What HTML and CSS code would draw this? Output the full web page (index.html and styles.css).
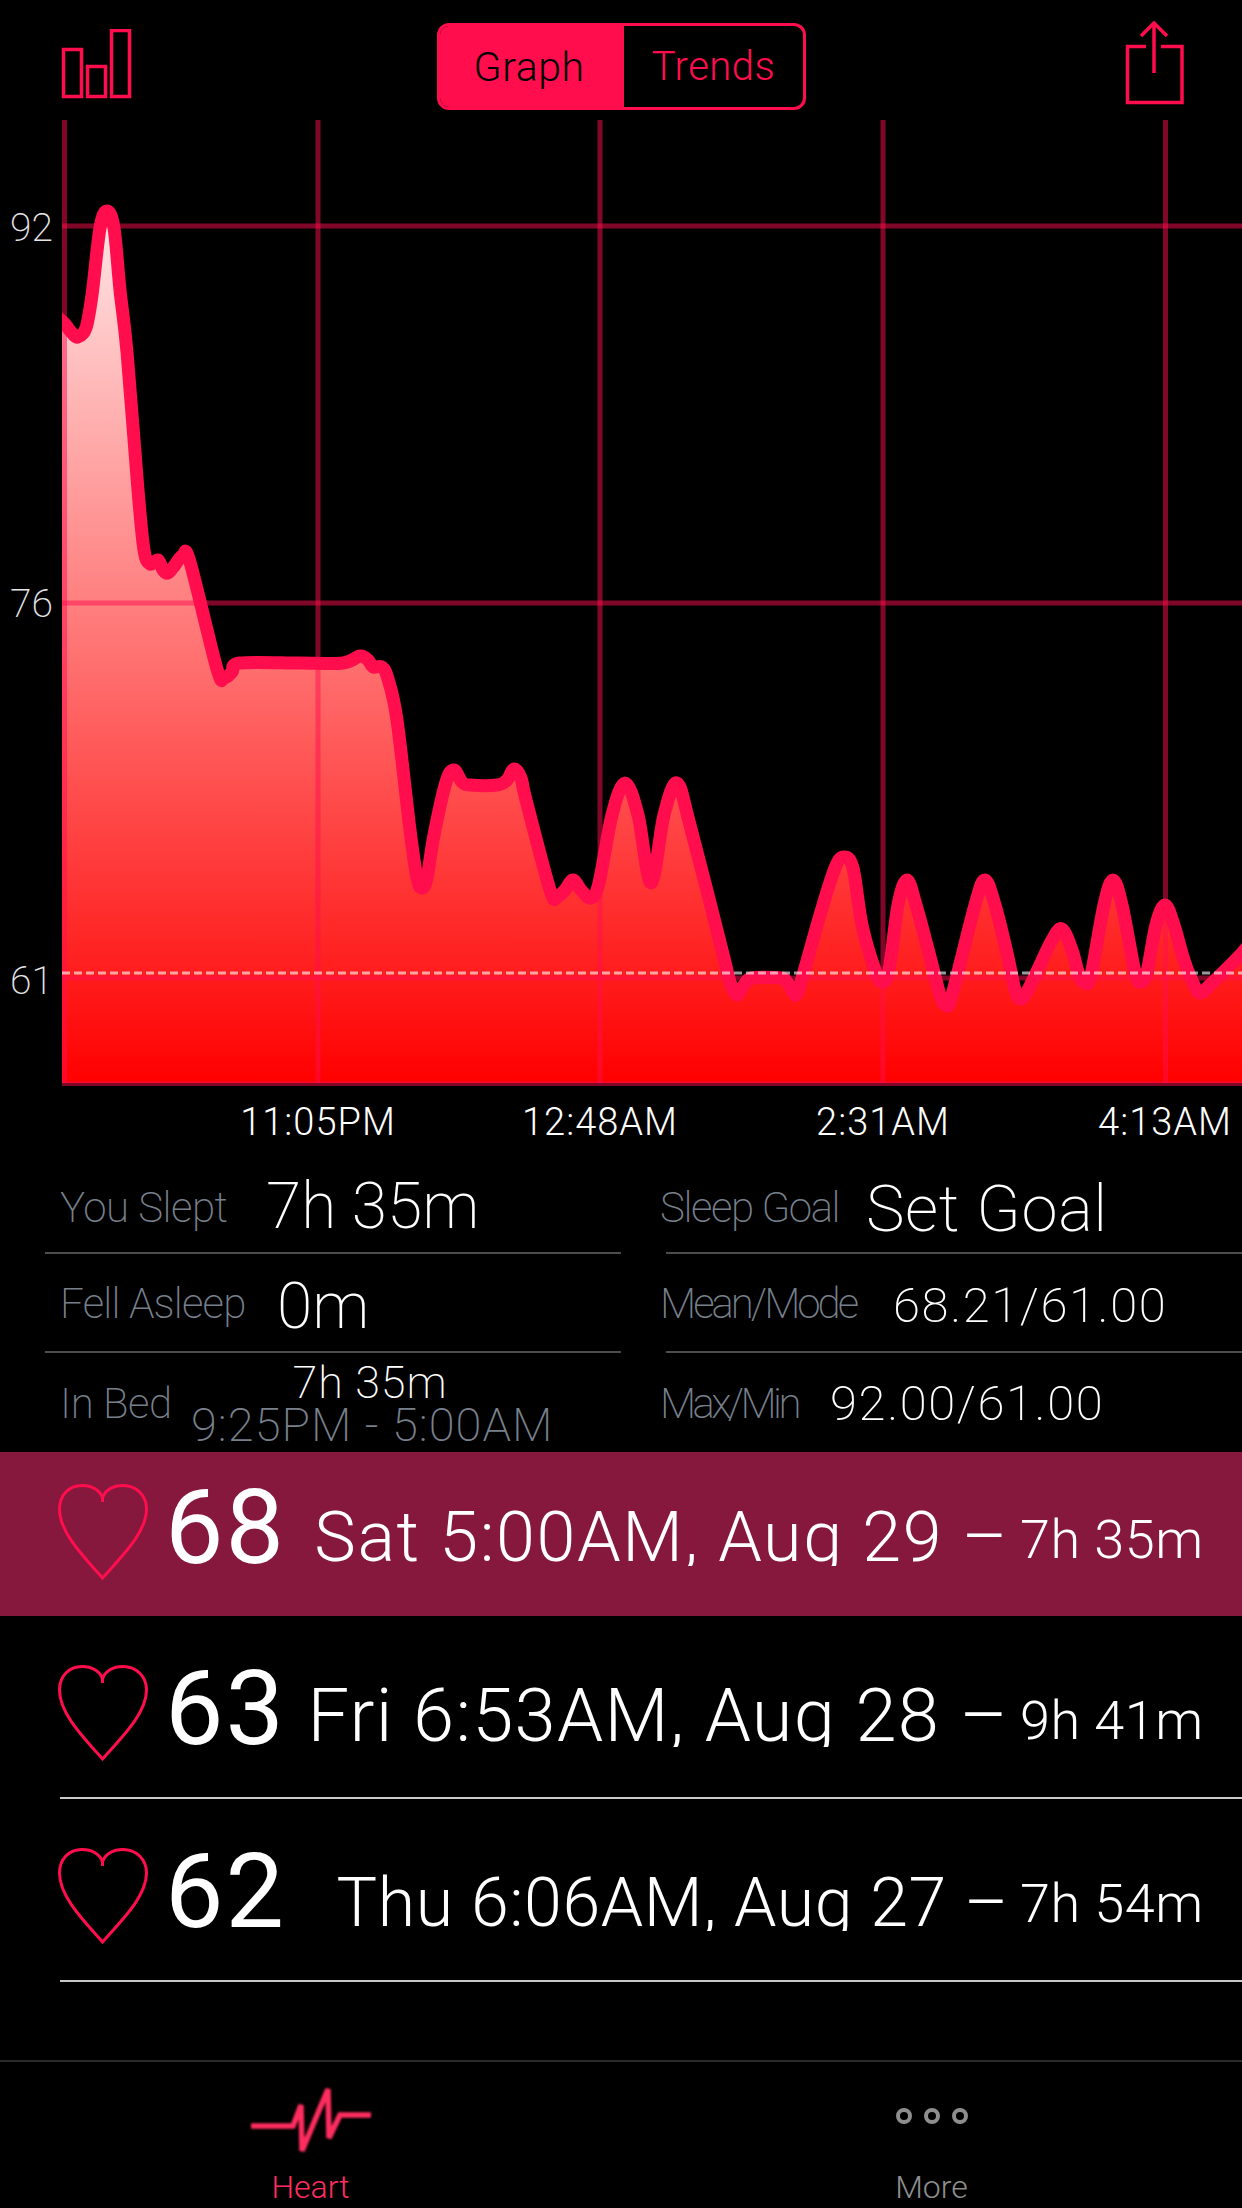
FILE: index.html
```html
<!DOCTYPE html>
<html lang="en">
<head>
    <meta charset="UTF-8">
    <title>Heart</title>
    <link rel="stylesheet" href="styles.css">
</head>
<body>
    <div class="page">
        <div class="topbar">
            <svg class="bars-icon" width="72" height="72" viewBox="0 0 72 72">
                <rect x="2.5" y="20.5" width="18" height="47"/>
                <rect x="26.5" y="37.5" width="18" height="30"/>
                <rect x="50.5" y="1.5" width="18" height="66"/>
            </svg>
            <div class="segments">
                <div class="segment active">Graph</div>
                <div class="segment">Trends</div>
            </div>
            <svg class="share-icon" width="60" height="84" viewBox="0 0 60 84">
                <path d="M22 25.5H3.5V81.5H58V25.5H37"/>
                <path d="M30 2V52M17 15L30 2L43 15"/>
            </svg>
        </div>

        <svg id="chart" class="chart" width="1242" height="1030" viewBox="0 120 1242 1030">
            <defs>
                <linearGradient id="fillGrad" gradientUnits="userSpaceOnUse" x1="0" y1="120" x2="0" y2="1083">
                    <stop offset="0" stop-color="#ffffff"/>
                    <stop offset="1" stop-color="#ff0000"/>
                </linearGradient>
                <clipPath id="plotClip"><rect x="62" y="120" width="1180" height="966"/></clipPath>
            </defs>
            <g clip-path="url(#plotClip)">
                <path id="area" fill="url(#fillGrad)"/>
                <g class="grid">
                    <line x1="64.5" y1="120" x2="64.5" y2="1083"/>
                    <line x1="318" y1="120" x2="318" y2="1083"/>
                    <line x1="600" y1="120" x2="600" y2="1083"/>
                    <line x1="883" y1="120" x2="883" y2="1083"/>
                    <line x1="1165.5" y1="120" x2="1165.5" y2="1083"/>
                    <line x1="62" y1="226" x2="1242" y2="226"/>
                    <line x1="62" y1="603" x2="1242" y2="603"/>
                    <line x1="62" y1="978" x2="1242" y2="978"/>
                    <line x1="62" y1="1084" x2="1242" y2="1084"/>
                </g>
                <path id="curve" class="curve"/>
                <line class="mode-line" x1="62" y1="973" x2="1242" y2="973"/>
            </g>
            <g class="y-labels">
                <text x="10" y="241">92</text>
                <text x="10" y="617">76</text>
                <text x="10" y="994">61</text>
            </g>
            <g class="x-labels">
                <text x="318" y="1135">11:05PM</text>
                <text x="600" y="1135">12:48AM</text>
                <text x="883" y="1135">2:31AM</text>
                <text x="1165" y="1135">4:13AM</text>
            </g>
        </svg>

        <div class="stats">
            <div class="stat-col left">
                <div class="stat first">
                    <span class="label w-slept">You Slept</span>
                    <span class="value big slept">7h 35m</span>
                </div>
                <div class="stat second">
                    <span class="label w-asleep">Fell Asleep</span>
                    <span class="value big asleep">0m</span>
                </div>
                <div class="stat third">
                    <span class="label w-bed">In Bed</span>
                    <div class="bed-times">
                        <div class="bed-total">7h 35m</div>
                        <div class="bed-range">9:25PM - 5:00AM</div>
                    </div>
                </div>
            </div>
            <div class="stat-col right">
                <div class="stat first">
                    <span class="label w-goal">Sleep Goal</span>
                    <span class="value big goal">Set Goal</span>
                </div>
                <div class="stat second">
                    <span class="label w-mean">Mean/Mode</span>
                    <span class="value mid mean">68.21/61.00</span>
                </div>
                <div class="stat third">
                    <span class="label w-max">Max/Min</span>
                    <span class="value mid max">92.00/61.00</span>
                </div>
            </div>
        </div>

        <div class="day selected">
            <svg class="heart" width="90" height="96" viewBox="0 0 90 96"><path d="M44.5 18V14C47 6 55 1.5 65 1.5C78 1.5 88.5 11 88.5 25C88.5 48 65 71 44.5 94C24 71 1.5 48 1.5 25C1.5 11 11 1.5 24 1.5C34 1.5 42 6 44.5 14"/></svg>
            <span class="bpm">68</span>
            <span class="date date-sat">Sat 5:00AM, Aug 29 –</span>
            <span class="duration">7h 35m</span>
        </div>
        <div class="day">
            <svg class="heart" width="90" height="96" viewBox="0 0 90 96"><path d="M44.5 18V14C47 6 55 1.5 65 1.5C78 1.5 88.5 11 88.5 25C88.5 48 65 71 44.5 94C24 71 1.5 48 1.5 25C1.5 11 11 1.5 24 1.5C34 1.5 42 6 44.5 14"/></svg>
            <span class="bpm">63</span>
            <span class="date date-fri">Fri 6:53AM, Aug 28 –</span>
            <span class="duration">9h 41m</span>
        </div>
        <div class="day">
            <svg class="heart" width="90" height="96" viewBox="0 0 90 96"><path d="M44.5 18V14C47 6 55 1.5 65 1.5C78 1.5 88.5 11 88.5 25C88.5 48 65 71 44.5 94C24 71 1.5 48 1.5 25C1.5 11 11 1.5 24 1.5C34 1.5 42 6 44.5 14"/></svg>
            <span class="bpm">62</span>
            <span class="date date-thu">Thu 6:06AM, Aug 27 –</span>
            <span class="duration">7h 54m</span>
        </div>

        <div class="tabbar">
            <div class="tab active">
                <svg class="tab-icon" width="124" height="72" viewBox="0 0 124 72">
                    <path class="pulse" d="M2 41H44L52 20L53 66L79 4L80 53L91 30H122"/>
                </svg>
                <span class="tab-label">Heart</span>
            </div>
            <div class="tab">
                <svg class="tab-icon" width="124" height="72" viewBox="0 0 124 72">
                    <g class="dots">
                        <circle cx="34" cy="31" r="6"/>
                        <circle cx="62" cy="31" r="6"/>
                        <circle cx="90" cy="31" r="6"/>
                    </g>
                </svg>
                <span class="tab-label">More</span>
            </div>
        </div>
    </div>

    <script src="chart.js"></script>
</body>
</html>
```
FILE: styles.css
```css
* {
    box-sizing: border-box;
}
html, body {
    margin: 0;
    background: #000;
}
body {
    font-family: Roboto, "Liberation Sans", sans-serif;
    font-weight: 200;
    color: #fff;
}
.page {
    width: 1242px;
    height: 2208px;
    overflow: hidden;
}

/* top bar */
.topbar {
    height: 120px;
    display: flex;
    justify-content: space-between;
    padding: 0 58px 0 61px;
}
.bars-icon {
    margin-top: 29px;
}
.bars-icon rect {
    fill: none;
    stroke: #ff0d4d;
    stroke-width: 3.5;
}
.share-icon {
    margin-top: 21px;
}
.share-icon path {
    fill: none;
    stroke: #ff0d4d;
    stroke-width: 3.5;
}
.segments {
    display: flex;
    width: 369px;
    height: 87px;
    margin-top: 23px;
    margin-right: 14px;
    border: 3px solid #ff0d4d;
    border-radius: 12px;
    overflow: hidden;
}
.segment {
    flex: 1;
    display: flex;
    align-items: center;
    justify-content: center;
    color: #ff0d4d;
    font-size: 40px;
    font-weight: 300;
    letter-spacing: 0.5px;
}
.segment.active {
    flex: 0 0 184px;
    padding-right: 6px;
    background: #ff0d4d;
    color: #000;
    font-size: 41px;
}

/* chart */
.chart {
    display: block;
}
.grid line {
    stroke: rgba(255, 13, 77, 0.5);
    stroke-width: 5;
}
.curve {
    fill: none;
    stroke: #ff0d4d;
    stroke-width: 13;
    stroke-linejoin: round;
}
.mode-line {
    stroke: rgba(255, 255, 255, 0.6);
    stroke-width: 3;
    stroke-dasharray: 8 4;
}
.y-labels text {
    fill: #e6e6e6;
    font-size: 39px;
    font-weight: 200;
}
.x-labels text {
    fill: #fff;
    font-size: 38px;
    font-weight: 300;
    letter-spacing: 1px;
    text-anchor: middle;
}

/* stats */
.stats {
    display: flex;
    justify-content: space-between;
    height: 302px;
}
.stat-col {
    width: 576px;
}
.stat-col.left {
    margin-left: 45px;
}
.stat {
    display: flex;
    align-items: flex-end;
    padding-left: 15px;
    border-bottom: 2px solid #4d4d4d;
}
.stat-col.right .stat {
    padding-left: 0;
}
.stat-col.right .label {
    margin-left: -6px;
}
.stat.first {
    height: 104px;
}
.stat.second {
    height: 99px;
}
.stat.third {
    height: 99px;
    border-bottom: none;
}
.label {
    font-size: 42px;
    line-height: 1;
    color: #78808c;
    white-space: nowrap;
}
.first .label {
    margin-bottom: 23px;
}
.second .label {
    margin-bottom: 26px;
}
.third .label {
    margin-bottom: 27px;
}
.value {
    line-height: 1;
    white-space: nowrap;
}
.value.big {
    font-size: 64px;
}
.value.mid {
    font-size: 49px;
    letter-spacing: 1.6px;
}
.w-slept { width: 206px; letter-spacing: -0.5px; }
.w-asleep { width: 217px; letter-spacing: -0.8px; }
.w-bed { width: 131px; letter-spacing: -0.4px; }
.w-goal { width: 206px; letter-spacing: -1.4px; }
.w-mean { width: 233px; letter-spacing: -3px; }
.w-max { width: 170px; letter-spacing: -3.6px; }
.slept { margin-bottom: 13px; }
.asleep { margin-bottom: 12px; }
.value.goal {
    margin-bottom: 10px;
    font-size: 65px;
    letter-spacing: 0.6px;
}
.mean { margin-bottom: 21px; }
.max { margin-bottom: 24px; }
.bed-times {
    width: 358px;
    text-align: center;
    margin-bottom: 5px;
}
.bed-total {
    font-size: 45px;
    line-height: 40px;
    letter-spacing: 0.8px;
}
.bed-range {
    font-size: 47px;
    line-height: 44px;
    letter-spacing: 1px;
    color: #78808c;
    white-space: nowrap;
}

/* day rows */
.day {
    display: flex;
    align-items: flex-end;
    height: 183px;
    margin-left: 60px;
    padding: 0 39px 36px 0;
    border-bottom: 2px solid #c8c8c8;
}
.day.selected {
    height: 164px;
    margin-left: 0;
    padding-left: 58px;
    background: #86183e;
    border-bottom: none;
}
.heart {
    margin-left: -2px;
    flex: none;
}
.selected .heart {
    margin-left: 0;
}
.heart path {
    fill: none;
    stroke: #ff0d4d;
    stroke-width: 3;
}
.bpm {
    margin-left: 17px;
    font-size: 104px;
    font-weight: 400;
    letter-spacing: 2px;
    line-height: 1;
}
.date {
    margin-left: auto;
    overflow: hidden;
    font-weight: 300;
    white-space: nowrap;
}
.date-sat {
    height: 64px;
    margin-bottom: 14px;
    font-size: 70px;
    line-height: 70px;
    letter-spacing: 1.6px;
}
.date-fri {
    height: 68px;
    margin-bottom: 14px;
    font-size: 74px;
    line-height: 74px;
    letter-spacing: 1.3px;
}
.date-thu {
    height: 62px;
    margin-bottom: 13px;
    font-size: 68px;
    line-height: 68px;
    letter-spacing: 0.6px;
}
.duration {
    width: 183px;
    margin-left: 11px;
    margin-bottom: 13px;
    font-size: 54px;
    font-weight: 300;
    letter-spacing: 0.5px;
    line-height: 1;
    text-align: right;
    white-space: nowrap;
}

/* tab bar */
.tabbar {
    display: flex;
    height: 148px;
    margin-top: 78px;
    border-top: 2px solid #2a2a2a;
}
.tab {
    flex: 1;
    display: flex;
    flex-direction: column;
    align-items: center;
    padding-top: 23px;
    color: #8e8e8e;
}
.tab.active {
    color: #ff2d5f;
}
.tab-icon {
    display: block;
}
.tab-label {
    font-size: 32px;
    font-weight: 300;
    line-height: 1;
    margin-top: 14px;
}
.pulse {
    fill: none;
    stroke: #ff2d5f;
    stroke-width: 5.5;
    filter: blur(1px);
}
.dots circle {
    fill: none;
    stroke: #8e8e8e;
    stroke-width: 4;
}
```
FILE: chart.js
```js
// heart rate samples, in page pixels
var points = [
    [56,316],[64,323],[72,333],[78,337],[86,328],[92,295],[100,228],[107,211],[114,228],[120,290],[127,352],[138,490],[144,550],
    [150,564],[158,560],[163,570],[168,573],[175,565],[183,555],[190,562],[217,669],[224,678],[232,672],[240,663],
    [300,663],[343,663],[360,656],[368,660],[373,667],[382,667],[388,679],[397,720],[410,830],[417,878],[422,888],
    [427,878],[434,835],[446,782],[454,770],[462,782],[470,785],[497,785],[507,780],[514,769],[521,778],[526,800],[550,890],
    [557,897],[565,890],[573,880],[581,890],[591,898],[599,883],[612,815],[625,783],[638,815],[651,883],
    [664,815],[677,783],[690,825],[722,950],[730,982],[737,995],[744,985],[752,978],[781,978],[789,985],[796,995],
    [803,975],[820,915],[835,868],[844,857],[853,868],[862,925],[875,970],[882,982],[889,970],[898,905],[907,880],[916,905],
    [929,953],[940,995],[946,1005],[952,995],[975,905],[985,880],[995,905],[1007,953],[1015,990],[1021,999],[1028,990],[1039,967],
    [1052,940],[1062,929],[1072,950],[1079,975],[1085,983],[1091,975],[1104,905],[1113,880],[1122,905],[1135,972],[1141,982],[1147,972],
    [1156,925],[1165,905],[1174,925],[1184,960],[1195,987],[1201,993],[1210,985],[1242,953],[1260,930]
];

// catmull-rom to bezier
function smoothPath(pts) {
    var d = "M" + pts[0][0] + " " + pts[0][1];
    for (var i = 0; i < pts.length - 1; i++) {
        var p0 = pts[Math.max(i - 1, 0)];
        var p1 = pts[i];
        var p2 = pts[i + 1];
        var p3 = pts[Math.min(i + 2, pts.length - 1)];
        var c1x = p1[0] + (p2[0] - p0[0]) / 6;
        var c1y = p1[1] + (p2[1] - p0[1]) / 6;
        var c2x = p2[0] - (p3[0] - p1[0]) / 6;
        var c2y = p2[1] - (p3[1] - p1[1]) / 6;
        d += "C" + c1x + " " + c1y + " " + c2x + " " + c2y + " " + p2[0] + " " + p2[1];
    }
    return d;
}

var line = smoothPath(points);
document.getElementById("curve").setAttribute("d", line);
document.getElementById("area").setAttribute("d", line + "V1083H56Z");
```
